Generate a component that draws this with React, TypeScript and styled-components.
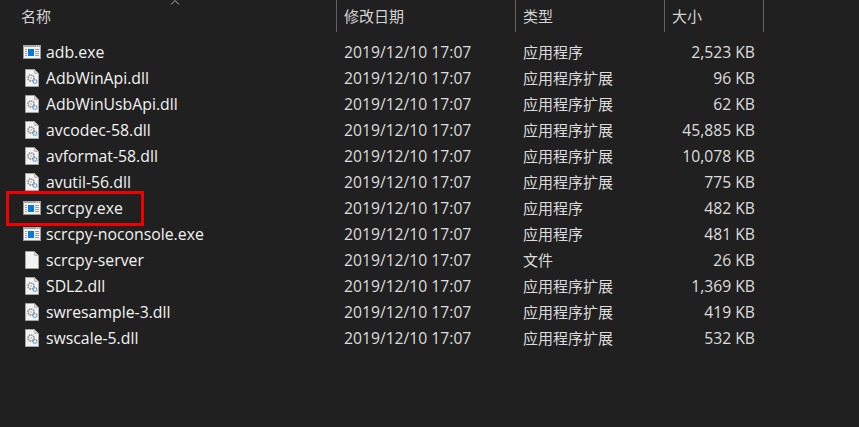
import React from "react";
import styled, { createGlobalStyle } from "styled-components";

const Global = createGlobalStyle`
  html, body { margin: 0; padding: 0; background: #202020; }
  body { width: 859px; height: 427px; overflow: hidden; font-family: "Open Sans", "Noto Sans CJK SC", sans-serif; }
`;

const COLUMNS = "337px 179px 149px 99px";

const Explorer = styled.div`
  position: relative;
  width: 859px;
  height: 427px;
  background: #202020;
  color: #e6e6e6;
`;

const Header = styled.div`
  display: grid;
  grid-template-columns: ${COLUMNS};
  height: 32px;
  width: 764px;
`;

const HeadCell = styled.div<{ $first?: boolean }>`
  position: relative;
  height: 32px;
  padding-left: ${(p) => (p.$first ? "21px" : "7px")};
  font: 15px/32px "Noto Sans CJK SC", sans-serif;
  color: #d4d4d4;
  border-right: 1px solid #636363;
  box-sizing: border-box;
`;

const SortCaret = styled.svg`
  position: absolute;
  left: 170px;
  top: 0;
`;

const List = styled.div`
  padding-top: 7px;
  width: 764px;
`;

const Row = styled.div`
  display: grid;
  grid-template-columns: ${COLUMNS};
  height: 26px;
  align-items: center;
  font-size: 15.7px;
`;

const NameCell = styled.div`
  display: flex;
  align-items: center;
  padding-left: 22px;
  gap: 5px;
  color: #f2f2f2;
  font-size: 15.8px;
`;

const IconBox = styled.svg`
  flex: none;
  width: 19px;
  height: 18px;
`;

const DateCell = styled.div`
  padding-left: 7px;
  color: #dcdcdc;
`;

const TypeCell = styled.div`
  padding-left: 7px;
  color: #dcdcdc;
  font: 15px/24px "Noto Sans CJK SC", sans-serif;
`;

const SizeCell = styled.div`
  text-align: right;
  padding-right: 9px;
  color: #dcdcdc;
`;

const Highlight = styled.div`
  position: absolute;
  left: 6px;
  top: 191px;
  width: 138px;
  height: 35px;
  box-sizing: border-box;
  border: 3px solid #f00000;
`;

type Kind = "exe" | "dll" | "file";

const ExeIcon = () => (
  <IconBox viewBox="0 0 19 18">
    <rect x="1.5" y="2.5" width="17" height="13" fill="#f2f2f2" stroke="#9a9a9a" strokeWidth="1" />
    <rect x="1" y="2" width="18" height="2" fill="#a4a4a4" />
    <rect x="14" y="2.5" width="1" height="1" fill="#ececec" />
    <rect x="16" y="2.5" width="1" height="1" fill="#ececec" />
    <rect x="6" y="6" width="6" height="7" fill="#0a78d7" />
    <path d="M13 6.5h4M13 8.5h4M13 10.5h4M13 12.5h4M3 6.5h2M3 8.5h2M3 10.5h2M3 12.5h2" stroke="#a0a0a0" strokeWidth="1" />
  </IconBox>
);

const Page = ({ children }: { children?: React.ReactNode }) => (
  <IconBox viewBox="0 0 19 18">
    <path d="M3.5 .5H12.5L16.5 4.5V17.5H3.5Z" fill="#f3f3f3" stroke="#a5a5a5" strokeWidth="1" />
    <path d="M12.5 .5V4.5H16.5Z" fill="#d4d4d4" stroke="#a5a5a5" strokeWidth=".7" />
    {children}
  </IconBox>
);

const DllIcon = () => (
  <Page>
    <circle cx="9" cy="9" r="3" fill="none" stroke="#8c8c8c" strokeWidth="1.6" strokeDasharray="1.6 .7" />
    <circle cx="9" cy="9" r="1" fill="#c4c4c4" />
    <circle cx="13" cy="12.5" r="1.9" fill="none" stroke="#5f97d0" strokeWidth="1.3" strokeDasharray="1.3 .5" />
  </Page>
);

const icons: Record<Kind, React.FC> = { exe: ExeIcon, dll: DllIcon, file: () => <Page /> };

const T1 = "应用程序";
const T2 = "应用程序扩展";

const files: { name: string; kind: Kind; type: string; size: string }[] = [
  { name: "adb.exe", kind: "exe", type: T1, size: "2,523 KB" },
  { name: "AdbWinApi.dll", kind: "dll", type: T2, size: "96 KB" },
  { name: "AdbWinUsbApi.dll", kind: "dll", type: T2, size: "62 KB" },
  { name: "avcodec-58.dll", kind: "dll", type: T2, size: "45,885 KB" },
  { name: "avformat-58.dll", kind: "dll", type: T2, size: "10,078 KB" },
  { name: "avutil-56.dll", kind: "dll", type: T2, size: "775 KB" },
  { name: "scrcpy.exe", kind: "exe", type: T1, size: "482 KB" },
  { name: "scrcpy-noconsole.exe", kind: "exe", type: T1, size: "481 KB" },
  { name: "scrcpy-server", kind: "file", type: "文件", size: "26 KB" },
  { name: "SDL2.dll", kind: "dll", type: T2, size: "1,369 KB" },
  { name: "swresample-3.dll", kind: "dll", type: T2, size: "419 KB" },
  { name: "swscale-5.dll", kind: "dll", type: T2, size: "532 KB" },
];

export default function App() {
  return (
    <Explorer>
      <Global />
      <Header>
        <HeadCell $first>名称</HeadCell>
        <HeadCell>修改日期</HeadCell>
        <HeadCell>类型</HeadCell>
        <HeadCell>大小</HeadCell>
      </Header>
      <SortCaret width="10" height="5" viewBox="0 0 10 5">
        <path d="M1 4.5L5 .5L9 4.5" fill="none" stroke="#b5b5b5" strokeWidth="1" />
      </SortCaret>
      <List>
        {files.map((f) => {
          const Icon = icons[f.kind];
          return (
            <Row key={f.name}>
              <NameCell>
                <Icon />
                {f.name}
              </NameCell>
              <DateCell>2019/12/10 17:07</DateCell>
              <TypeCell>{f.type}</TypeCell>
              <SizeCell>{f.size}</SizeCell>
            </Row>
          );
        })}
      </List>
      <Highlight />
    </Explorer>
  );
}
